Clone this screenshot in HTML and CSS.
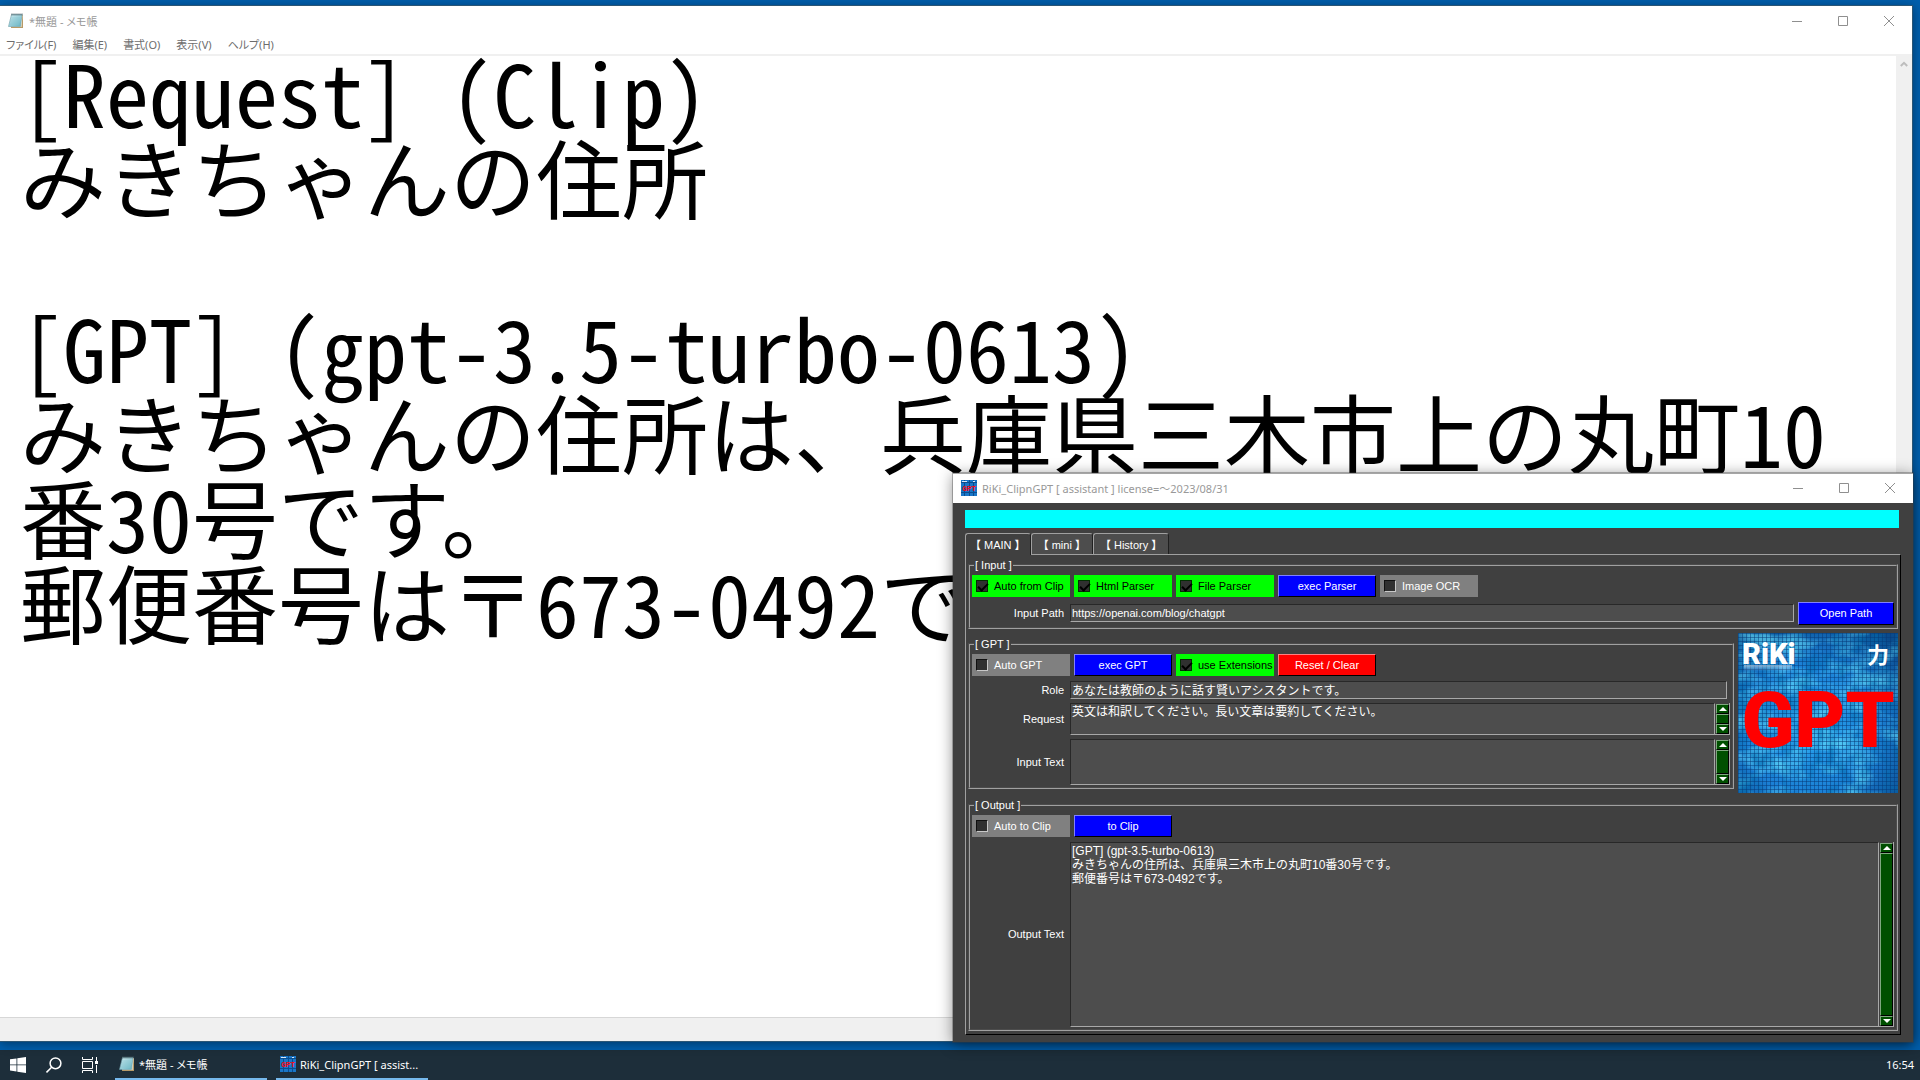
FILE: index.html
```html
<!DOCTYPE html>
<html lang="ja">
<head>
<meta charset="utf-8">
<title>RiKi_ClipnGPT</title>
<link rel="stylesheet" href="styles.css">
</head>
<body>
<svg class="defs" aria-hidden="true">
  <defs>
    <linearGradient id="pad" x1="0" y1="0" x2="1" y2="1">
      <stop offset="0" stop-color="#d3eef3"/><stop offset="1" stop-color="#5fb0c0"/>
    </linearGradient>
    <radialGradient id="glow" cx=".45" cy=".6" r=".75">
      <stop offset="0" stop-color="#28a4ee"/><stop offset=".55" stop-color="#1b80d6"/><stop offset="1" stop-color="#0a4a8c"/>
    </radialGradient>
    <pattern id="mesh" width="4" height="4" patternUnits="userSpaceOnUse">
      <path d="M0 .5H4M.5 0V4" stroke="#053a78" stroke-opacity=".5" fill="none"/>
    </pattern>
    <filter id="noise" x="0" y="0" width="100%" height="100%">
      <feTurbulence type="fractalNoise" baseFrequency=".03 .05" numOctaves="4" seed="8"/>
      <feColorMatrix values="0 0 0 0 .15  0 0 0 0 .8  0 0 0 0 1  3 0 0 0 -1.2"/>
    </filter>
    <filter id="shade" x="0" y="0" width="100%" height="100%">
      <feTurbulence type="fractalNoise" baseFrequency=".09 .05" numOctaves="3" seed="3"/>
      <feColorMatrix values="0 0 0 0 0  0 0 0 0 .15  0 0 0 0 .4  0 3 0 0 -1.3"/>
    </filter>
    <linearGradient id="fade" x1="0" y1="0" x2="0" y2="1">
      <stop offset="0" stop-color="#fff" stop-opacity=".5"/><stop offset="1" stop-color="#fff" stop-opacity="0"/>
    </linearGradient>
  </defs>
  <symbol id="i-notepad" viewBox="0 0 16 16">
    <path d="M4 2h11v13H3z" fill="#b79a68"/>
    <path d="M4 2h10.500L13.500 14H3z" fill="#f4f0df"/>
    <path d="M3.500 1.500h10.500L12.500 13.500H.5z" fill="url(#pad)" stroke="#6d9eaa" stroke-width=".6"/>
    <path d="M3.500 5h9M3 7h9M2.500 9h9M2.200 11h9" stroke="#8cc6d1" stroke-width=".6"/>
    <path d="M4 .5v2M6 .5v2M8 .5v2M10 .5v2M12 .5v2M14 .5v2" stroke="#51666c"/>
  </symbol>
  <symbol id="i-grid" viewBox="0 0 16 16">
    <rect width="16" height="16" fill="#1976c8"/>
    <path d="M0 2.500h16M0 12.500h16M3.500 0v16M8.500 0v16M12.500 0v16" stroke="#0b4d8f"/>
    <path d="M1 1.500h5M12 1.500h2" stroke="#dbe9f8"/>
  </symbol>
  <symbol id="i-min" viewBox="0 0 10 10"><path d="M0 5.500h10" stroke="#8f8f8f"/></symbol>
  <symbol id="i-max" viewBox="0 0 10 10"><path d="M.5.5h9v9h-9z" fill="none" stroke="#8f8f8f"/></symbol>
  <symbol id="i-close" viewBox="0 0 10 10"><path d="M0 0l10 10M10 0L0 10" stroke="#8f8f8f"/></symbol>
</svg>

<main class="desktop">
  <section class="window notepad" aria-label="メモ帳">
    <header class="titlebar">
      <svg class="icon"><use href="#i-notepad"/></svg>
      <h1 class="caption">*無題 - メモ帳</h1>
      <button class="ctl" aria-label="最小化"><svg><use href="#i-min"/></svg></button>
      <button class="ctl" aria-label="最大化"><svg><use href="#i-max"/></svg></button>
      <button class="ctl" aria-label="閉じる"><svg><use href="#i-close"/></svg></button>
    </header>
    <nav class="menubar">
      <button>ファイル(F)</button><button>編集(E)</button><button>書式(O)</button><button>表示(V)</button><button>ヘルプ(H)</button>
    </nav>
    <div class="editor">
      <textarea class="page" aria-label="本文" spellcheck="false">[Request] (Clip)
みきちゃんの住所

[GPT] (gpt-3.5-turbo-0613)
みきちゃんの住所は、兵庫県三木市上の丸町10番30号です。
郵便番号は〒673-0492です。</textarea>
      <div class="track"><svg viewBox="0 0 8 6"><path d="M.8 5L4 1.800 7.200 5" fill="none" stroke="#bdbdbd" stroke-width="2"/></svg></div>
    </div>
    <footer class="status"></footer>
  </section>

  <section class="window app" aria-label="RiKi_ClipnGPT">
    <header class="titlebar">
      <svg class="icon" viewBox="0 0 16 16"><use href="#i-grid"/><text class="mark" x="8" y="11">GPT</text></svg>
      <h1 class="caption">RiKi_ClipnGPT [ assistant ] license=～2023/08/31</h1>
      <button class="ctl" aria-label="最小化"><svg><use href="#i-min"/></svg></button>
      <button class="ctl" aria-label="最大化"><svg><use href="#i-max"/></svg></button>
      <button class="ctl" aria-label="閉じる"><svg><use href="#i-close"/></svg></button>
    </header>
    <div class="body">
      <div class="banner"></div>
      <div class="tabs" role="tablist">
        <button class="tab active" role="tab" aria-selected="true">【 MAIN 】</button>
        <button class="tab" role="tab">【 mini 】</button>
        <button class="tab" role="tab">【 History 】</button>
      </div>
      <div class="panel" role="tabpanel">
        <fieldset class="group">
          <legend>[ Input ]</legend>
          <div class="actions">
            <label class="check"><input type="checkbox" checked>Auto from Clip</label>
            <label class="check"><input type="checkbox" checked>Html Parser</label>
            <label class="check"><input type="checkbox" checked>File Parser</label>
            <button class="btn">exec Parser</button>
            <label class="check"><input type="checkbox">Image OCR</label>
          </div>
          <div class="row">
            <label class="name" for="path">Input Path</label>
            <input class="field" id="path" type="text" value="https://openai.com/blog/chatgpt">
            <button class="btn open">Open Path</button>
          </div>
        </fieldset>

        <div class="middle">
          <fieldset class="group gpt">
            <legend>[ GPT ]</legend>
            <div class="actions">
              <label class="check"><input type="checkbox">Auto GPT</label>
              <button class="btn">exec GPT</button>
              <label class="check"><input type="checkbox" checked>use Extensions</label>
              <button class="btn reset">Reset / Clear</button>
            </div>
            <div class="row role">
              <label class="name" for="role">Role</label>
              <input class="field ja" id="role" type="text" value="あなたは教師のように話す賢いアシスタントです。">
            </div>
            <div class="row short">
              <label class="name" for="request">Request</label>
              <textarea class="field ja" id="request">英文は和訳してください。長い文章は要約してください。</textarea>
              <div class="scroll"><button class="up" aria-label="上へ"></button><div class="thumb"></div><button class="down" aria-label="下へ"></button></div>
            </div>
            <div class="row tall">
              <label class="name" for="text">Input Text</label>
              <textarea class="field ja" id="text"></textarea>
              <div class="scroll"><button class="up" aria-label="上へ"></button><div class="thumb"></div><button class="down" aria-label="下へ"></button></div>
            </div>
          </fieldset>
          <svg class="logo" viewBox="0 0 160 160" role="img" aria-label="RiKi GPT">
            <rect width="160" height="160" fill="url(#glow)"/>
            <rect width="160" height="160" filter="url(#noise)" opacity=".6"/>
            <rect width="160" height="160" filter="url(#shade)" opacity=".5"/>
            <rect width="160" height="160" fill="url(#mesh)"/>
            <path d="M6 32h48v6H6z" fill="url(#fade)"/>
            <text x="4" y="31" font-family="Roboto" font-weight="900" font-size="29" fill="#fff">RiKi</text>
            <text x="129" y="30" font-family="Noto Sans CJK JP" font-weight="700" font-size="22" fill="#fff">力</text>
            <text x="80" y="114" text-anchor="middle" font-family="Roboto" font-weight="900" font-size="78" fill="#f00">GPT</text>
          </svg>
        </div>

        <fieldset class="group output">
          <legend>[ Output ]</legend>
          <div class="actions">
            <label class="check"><input type="checkbox">Auto to Clip</label>
            <button class="btn">to Clip</button>
          </div>
          <div class="row fill">
            <label class="name" for="out">Output Text</label>
            <textarea class="field ja" id="out">[GPT] (gpt-3.5-turbo-0613)
みきちゃんの住所は、兵庫県三木市上の丸町10番30号です。
郵便番号は〒673-0492です。</textarea>
            <div class="scroll"><button class="up" aria-label="上へ"></button><div class="thumb"></div><button class="down" aria-label="下へ"></button></div>
          </div>
        </fieldset>
      </div>
    </div>
  </section>
</main>

<footer class="taskbar">
  <button class="sys" aria-label="スタート"><svg viewBox="0 0 16 16"><path d="M0 2.300L6.500 1.400V7.500H0zM7.300 1.300L16 0V7.500H7.300zM0 8.300H6.500V14.500L0 13.600zM7.300 8.300H16V16L7.300 14.700z" fill="#fff"/></svg></button>
  <button class="sys" aria-label="検索"><svg viewBox="0 0 16 16"><circle cx="9.500" cy="6.300" r="5.400" fill="none" stroke="#fff" stroke-width="1.500"/><path d="M5.600 10.200L.5 15.400" stroke="#fff" stroke-width="1.500"/></svg></button>
  <button class="sys" aria-label="タスク ビュー"><svg viewBox="0 0 16 16"><path d="M.5 0v2.500h10V0M.5 16v-2.500h10V16M.5 4.500h10v7H.5zM14.500 0v4M14.500 8v8" fill="none" stroke="#fff"/><path d="M13 4h3v3h-3z" fill="#fff"/></svg></button>
  <button class="task"><svg class="icon"><use href="#i-notepad"/></svg>*無題 - メモ帳</button>
  <button class="task"><svg class="icon" viewBox="0 0 16 16"><use href="#i-grid"/><text class="mark" x="8" y="11">GPT</text></svg>RiKi_ClipnGPT [ assist...</button>
  <time class="clock">16:54</time>
</footer>
</body>
</html>
```
FILE: styles.css
```css
* { box-sizing: border-box; }

body {
  margin: 0;
  height: 100vh;
  display: flex;
  flex-direction: column;
  overflow: hidden;
  background: #005fad;
  font-family: "Noto Sans", "Noto Sans CJK JP", sans-serif;
  font-size: 11px;
}

button, input, textarea {
  margin: 0;
  padding: 0;
  border: 0;
  border-radius: 0;
  background: none;
  color: inherit;
  font: inherit;
  outline: none;
}
textarea { display: block; resize: none; overflow: hidden; }
.defs { position: absolute; width: 0; height: 0; }

.desktop { position: relative; flex: 1; min-height: 0; }

/* Windows */
.window {
  position: absolute;
  display: flex;
  flex-direction: column;
}
.notepad {
  inset: 5px 7px 8px 0;
  border: solid #2b5675;
  border-width: 1px 1px 1px 0;
  background: #fff;
  box-shadow: 0 2px 10px rgba(0, 0, 0, .4);
}
.app {
  top: 45%;
  right: 7px;
  bottom: 8px;
  width: 50%;
  min-width: 800px;
  border-top: 1px solid #a5a5a5;
  background: #404040;
  box-shadow: 0 0 0 1px rgba(60, 60, 60, .35), 0 2px 14px rgba(0, 0, 0, .45);
}

.titlebar {
  display: flex;
  align-items: center;
  height: 30px;
  padding-left: 8px;
  background: #fff;
}
.app .titlebar { height: 29px; }
.icon { flex: none; width: 16px; height: 16px; }
.mark {
  fill: #f01020;
  font: 900 7px Roboto, sans-serif;
  text-anchor: middle;
}
.caption {
  flex: 1;
  margin: 0 0 0 5px;
  color: #999;
  font-size: 11px;
  font-weight: 400;
  font-feature-settings: "palt";
}
.ctl {
  display: grid;
  place-items: center;
  width: 46px;
  height: 28px;
}
.ctl svg { width: 10px; height: 10px; }

/* Notepad */
.menubar {
  display: flex;
  gap: 16px;
  height: 18px;
  padding-left: 6px;
  color: #6d6d6d;
  font-feature-settings: "palt";
}
.menubar button { line-height: 18px; }
.editor {
  display: flex;
  flex: 1;
  min-height: 0;
  border-top: 2px solid #f0f0f0;
}
.page {
  flex: 1;
  margin-top: -8px;
  padding: 0 20px;
  color: #000;
  font-family: "Noto Sans CJK JP", sans-serif;
  font-size: 86px;
  line-height: 85px;
  font-feature-settings: "hwid";
}
.track {
  width: 16px;
  padding: 5px 4px;
  background: #f0f0f0;
}
.track svg { display: block; width: 8px; height: 6px; }
.status {
  height: 24px;
  border-top: 1px solid #d7d7d7;
  background: #f0f0f0;
}

/* Assistant */
.body {
  flex: 1;
  display: flex;
  flex-direction: column;
  min-height: 0;
  padding: 7px 12px;
  color: #fff;
  font-family: "Liberation Sans", "Noto Sans CJK JP", sans-serif;
}
.banner { height: 18px; margin-right: 2px; background: #0ff; }
.tabs {
  display: flex;
  margin-top: 5px;
}
.tab {
  height: 21px;
  padding: 0 6px;
  border: solid #a0a0a0;
  border-width: 1px 1px 0;
  border-right-color: #202020;
  border-radius: 3px 3px 0 0;
  background: #4d4d4d;
}
.tab.active {
  height: 22px;
  margin-bottom: -1px;
  padding: 0 4px;
  z-index: 1;
  background: #404040;
}
.panel {
  flex: 1;
  display: flex;
  flex-direction: column;
  gap: 4px;
  min-height: 0;
  padding: 3px 2px;
  border: 1px solid;
  border-color: #a0a0a0 #000 #000 #a0a0a0;
}
.group {
  min-width: 0;
  margin: 0;
  padding: 3px 2px 2px;
  border: 2px groove #a0a0a0;
}
.group legend {
  height: 14px;
  margin-left: 2px;
  padding: 0 1px;
  line-height: 14px;
}
.actions { display: flex; gap: 4px; margin-bottom: 5px; }
.actions > * { width: 98px; height: 22px; }

.check {
  display: flex;
  align-items: center;
  gap: 6px;
  padding-left: 4px;
  background: #808080;
  white-space: nowrap;
}
.check:has(:checked) { background: #0f0; color: #000; }
.check input {
  appearance: none;
  flex: none;
  width: 12px;
  height: 12px;
  border: 1px solid;
  border-color: #101010 #c8c8c8 #c8c8c8 #101010;
  background: #303030;
}
.check input:checked { border-color: #003000; }
.check input:checked::before {
  content: "";
  display: block;
  width: 8px;
  height: 4px;
  margin: 2px 1px;
  border: solid #000;
  border-width: 0 0 2px 2px;
  transform: rotate(-45deg);
}
.btn {
  border: 1px solid;
  border-color: #8080ff #000 #000 #8080ff;
  background: #00f;
}
.btn.reset { background: #f00; border-color: #ff8080 #000 #000 #ff8080; }
.btn.open { width: 96px; height: 23px; margin-left: 4px; }

.row { display: flex; align-items: center; }
.name { flex: none; width: 98px; padding-right: 6px; text-align: right; }
.field {
  flex: 1;
  min-width: 0;
  height: 18px;
  padding: 0 1px;
  border: 1px solid;
  border-color: #282828 #a8a8a8 #a8a8a8 #282828;
  background: #4d4d4d;
}
.ja {
  font-size: 12px;
  line-height: 14px;
}
textarea.field { height: 100%; padding-top: 1px; }
.role { padding-right: 3px; }
.short { height: 32px; margin-top: 4px; }
.tall { height: 46px; margin-top: 4px; }

.scroll {
  display: flex;
  flex-direction: column;
  width: 15px;
  height: 100%;
  padding: 1px 0 0 1px;
  border: solid #a8a8a8;
  border-width: 0 1px 1px 0;
}
.scroll > * {
  border: 1px solid;
  border-color: #80a880 #000 #000 #80a880;
  background: #005000;
}
.scroll button { display: grid; place-items: center; height: 10px; }
.scroll button::before {
  content: "";
  border: solid transparent;
  border-width: 0 4px;
}
.scroll .up::before { border-bottom: 4px solid #fff; }
.scroll .down::before { border-top: 4px solid #fff; }
.thumb { flex: 1; }

.middle { display: flex; align-items: center; gap: 4px; }
.gpt { flex: 1; }
.logo { flex: none; width: 160px; height: 160px; }

.output { flex: 1; display: flex; flex-direction: column; min-height: 0; margin-top: 1px; }
.fill { flex: 1; min-height: 0; }

/* Taskbar */
.taskbar {
  display: flex;
  height: 30px;
  background: #1d2e3a;
  color: #fff;
  font-feature-settings: "palt";
}
.sys {
  display: grid;
  place-items: center;
  width: 36px;
}
.sys svg { width: 16px; height: 16px; }
.task {
  display: flex;
  align-items: center;
  gap: 4px;
  width: 152px;
  margin-left: 7px;
  padding-left: 4px;
  border-bottom: 2px solid #76b9ed;
  white-space: nowrap;
}
.task + .task { margin-left: 9px; }
.clock { margin-left: auto; padding-right: 6px; line-height: 30px; }
```
